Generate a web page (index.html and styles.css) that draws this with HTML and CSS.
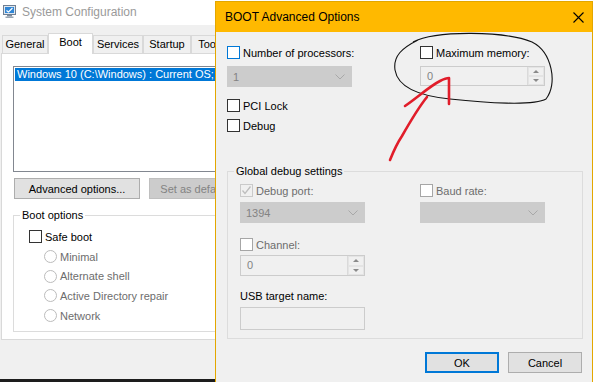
FILE: index.html
```html
<!DOCTYPE html>
<html lang="en">
  <head>
    <meta charset="UTF-8" />
    <meta name="viewport" content="width=device-width, initial-scale=1.0" />
    <title>BOOT Advanced Options</title>
    <link rel="stylesheet" href="styles.css">
  </head>

  <body>
    <div class="desktop">
      <!-- msconfig window, partly hidden behind the dialog -->
      <div class="window msconfig">
        <div class="titlebar">
          <svg class="app-icon" width="13" height="13" viewBox="0 0 13 13">
            <rect x="0.5" y="0.5" width="12" height="9" fill="#dfe6ee" stroke="#6f7f92" />
            <rect x="2" y="2" width="9" height="6" fill="#2f86d6" />
            <path d="M3.5 5.5 L5.5 7 L9.5 3" fill="none" stroke="#fff" stroke-width="1.2" />
            <rect x="4" y="10" width="5" height="1.5" fill="#7d8a99" />
            <rect x="2.5" y="11.5" width="8" height="1.5" fill="#9aa6b3" />
          </svg>
          <span class="title">System Configuration</span>
        </div>

        <div class="tabs">
          <div class="tab tab-general">General</div>
          <div class="tab tab-boot active">Boot</div>
          <div class="tab tab-services">Services</div>
          <div class="tab tab-startup">Startup</div>
          <div class="tab tab-tools">Tools</div>
        </div>

        <div class="tab-page">
          <div class="listbox">
            <div class="list-item selected">Windows 10 (C:\Windows) : Current OS; Default OS</div>
          </div>

          <div class="button-row">
            <button class="btn btn-advanced">Advanced options...</button>
            <button class="btn btn-default" disabled>Set as default</button>
          </div>

          <fieldset class="group boot-options">
            <legend>Boot options</legend>
            <div class="check">
              <span class="cb"></span>
              <span>Safe boot</span>
            </div>
            <div class="radio-list">
              <div class="radio"><span class="rb"></span><span>Minimal</span></div>
              <div class="radio"><span class="rb"></span><span>Alternate shell</span></div>
              <div class="radio"><span class="rb"></span><span>Active Directory repair</span></div>
              <div class="radio"><span class="rb"></span><span>Network</span></div>
            </div>
          </fieldset>
        </div>

        <div class="taskbar"></div>
      </div>

      <!-- BOOT Advanced Options dialog -->
      <div class="window dialog">
        <div class="dlg-titlebar">
          <span class="dlg-title">BOOT Advanced Options</span>
          <svg class="close" width="11" height="11" viewBox="0 0 11 11">
            <path d="M0.5 0.5 L10.5 10.5 M10.5 0.5 L0.5 10.5" stroke="#000" stroke-width="1.1" />
          </svg>
        </div>

        <div class="dlg-body">
          <div class="top-row">
            <div class="col col-left">
              <div class="check">
                <span class="cb focus"></span>
                <span>Number of processors:</span>
              </div>
              <div class="combo combo-proc">
                <span>1</span>
                <svg width="10" height="6" viewBox="0 0 10 6"><polyline points="0.5,0.5 5,5 9.5,0.5" fill="none" stroke="#a8a8a8" /></svg>
              </div>
              <div class="check check-pci">
                <span class="cb"></span>
                <span>PCI Lock</span>
              </div>
              <div class="check check-debug">
                <span class="cb"></span>
                <span>Debug</span>
              </div>
            </div>
            <div class="col col-right">
              <div class="check">
                <span class="cb"></span>
                <span>Maximum memory:</span>
              </div>
              <div class="spin spin-mem">
                <span class="spin-value">0</span>
                <span class="spin-buttons">
                  <span class="spin-up"></span>
                  <span class="spin-down"></span>
                </span>
              </div>
            </div>
          </div>

          <fieldset class="group debug-group">
            <legend>Global debug settings</legend>
            <div class="dg-row">
              <div class="col dg-left">
                <div class="check disabled">
                  <span class="cb checked">
                    <svg width="11" height="11" viewBox="0 0 11 11"><polyline points="1.5,5.5 4,8.5 9.5,1.5" fill="none" stroke="#bdbdbd" stroke-width="1.3" /></svg>
                  </span>
                  <span>Debug port:</span>
                </div>
                <div class="combo combo-port">
                  <span>1394</span>
                  <svg width="10" height="6" viewBox="0 0 10 6"><polyline points="0.5,0.5 5,5 9.5,0.5" fill="none" stroke="#a8a8a8" /></svg>
                </div>
                <div class="check disabled check-channel">
                  <span class="cb"></span>
                  <span>Channel:</span>
                </div>
                <div class="spin spin-channel">
                  <span class="spin-value">0</span>
                  <span class="spin-buttons">
                    <span class="spin-up"></span>
                    <span class="spin-down"></span>
                  </span>
                </div>
                <div class="field-label">USB target name:</div>
                <div class="textbox"></div>
              </div>
              <div class="col dg-right">
                <div class="check disabled">
                  <span class="cb"></span>
                  <span>Baud rate:</span>
                </div>
                <div class="combo combo-baud">
                  <span></span>
                  <svg width="10" height="6" viewBox="0 0 10 6"><polyline points="0.5,0.5 5,5 9.5,0.5" fill="none" stroke="#a8a8a8" /></svg>
                </div>
              </div>
            </div>
          </fieldset>

          <div class="dlg-buttons">
            <button class="btn btn-ok">OK</button>
            <button class="btn btn-cancel">Cancel</button>
          </div>
        </div>
      </div>

      <!-- hand drawn marks on top of the screenshot -->
      <svg class="marks" width="595" height="382" viewBox="0 0 595 382">
        <path d="M413 42 C436 30, 505 31, 532 42 C552 52, 558 84, 546 99 C534 106, 486 103, 450 99 C420 96, 398 88, 395 70 C393 56, 402 48, 418 40"
          fill="none" stroke="#111" stroke-width="1.1" />
        <path d="M390 160 C394 150, 398 142, 402 136 C410 122, 418 108, 427 97"
          fill="none" stroke="#e11d2a" stroke-width="2.6" stroke-linecap="round" />
        <path d="M405 106 C418 97, 430 86, 440 81 C444 79, 447 78, 449 78 L449 104"
          fill="none" stroke="#e11d2a" stroke-width="2.6" stroke-linecap="round" stroke-linejoin="round" />
      </svg>
    </div>
  </body>
</html>
```

FILE: styles.css
```css
body {
  margin: 0;
  background: #fff;
  font-family: "Liberation Sans", Arial, sans-serif;
  font-size: 11px;
  color: #000;
}
.desktop {
  position: relative;
  width: 595px;
  height: 382px;
  overflow: hidden;
}
.window {
  position: absolute;
  box-sizing: border-box;
}

/* msconfig window */
.msconfig {
  left: 0;
  top: 0;
  width: 216px;
  height: 382px;
  overflow: hidden;
  background: #f0f0f0;
  display: flex;
  flex-direction: column;
}
.titlebar {
  flex: none;
  height: 25px;
  box-sizing: border-box;
  padding: 0 0 2px 3px;
  background: #fff;
  display: flex;
  align-items: center;
  gap: 6px;
}
.title {
  font-size: 12px;
  color: #9a9a9a;
}
.tabs {
  flex: none;
  height: 28px;
  padding-left: 2px;
  display: flex;
  align-items: flex-end;
}
.tab {
  flex: none;
  box-sizing: border-box;
  height: 18px;
  line-height: 17px;
  border: 1px solid #d9d9d9;
  border-bottom: 0;
  background: #f0f0f0;
  text-align: center;
}
.tab-general {
  width: 46px;
}
.tab-boot {
  width: 45px;
}
.tab-services {
  width: 50px;
}
.tab-startup {
  width: 48px;
}
.tab-tools {
  width: 40px;
}
.tab.active {
  position: relative;
  z-index: 1;
  height: 21px;
  line-height: 17px;
  margin-bottom: -1px;
  background: #fff;
}
.tab-page {
  flex: none;
  width: 260px;
  height: 287px;
  box-sizing: border-box;
  margin-left: 1px;
  padding: 12px 0 0 11px;
  border: 1px solid #d9d9d9;
  background: #fff;
}
.listbox {
  height: 106px;
  box-sizing: border-box;
  border: 1px solid #828790;
  padding: 1px;
  overflow: hidden;
}
.list-item {
  height: 13px;
  line-height: 13px;
  padding-left: 2px;
  white-space: nowrap;
}
.list-item.selected {
  background: #0078d7;
  color: #fff;
}
.button-row {
  display: flex;
  gap: 9px;
  margin-top: 6px;
  padding-left: 1px;
}
.btn {
  flex: none;
  box-sizing: border-box;
  height: 21px;
  padding: 0;
  border: 1px solid #adadad;
  background: #e1e1e1;
  font: inherit;
  color: #000;
}
.btn-advanced {
  width: 126px;
}
.btn-default {
  width: 90px;
  background: #cccccc;
  border-color: #bfbfbf;
  color: #838383;
}

/* group boxes */
.group {
  margin: 0;
  border: 1px solid #dcdcdc;
}
.group legend {
  padding: 0 2px;
  line-height: 14px;
}
.boot-options {
  box-sizing: border-box;
  height: 124px;
  margin-top: 9px;
  padding: 8px 0 0 15px;
}
.boot-options legend {
  margin-left: -9px;
}

/* checkboxes and radios */
.check {
  display: flex;
  align-items: center;
  gap: 3px;
  height: 13px;
  white-space: nowrap;
}
.cb {
  flex: none;
  box-sizing: border-box;
  width: 13px;
  height: 13px;
  border: 1px solid #333;
  background: #fff;
  display: flex;
  align-items: center;
  justify-content: center;
}
.cb.focus {
  border-color: #0078d7;
}
.check.disabled {
  color: #6d6d6d;
}
.check.disabled .cb {
  border-color: #a6a6a6;
}
.check.disabled .cb.checked {
  border-color: #cacaca;
  background: #f0f0f0;
}
.radio-list {
  margin-top: 4px;
  padding-left: 15px;
}
.radio {
  display: flex;
  align-items: center;
  gap: 3px;
  height: 19.6px;
  color: #6d6d6d;
}
.rb {
  box-sizing: border-box;
  width: 13px;
  height: 13px;
  border: 1px solid #bcbcbc;
  border-radius: 50%;
  background: #fff;
}
.taskbar {
  margin-top: auto;
  height: 3px;
  background: #1d1d1d;
}

/* dialog */
.dialog {
  left: 215px;
  top: 1px;
  width: 378px;
  height: 381px;
  border: 1px solid #e3a700;
  border-bottom: 0;
  background: #f0f0f0;
  display: flex;
  flex-direction: column;
}
.dlg-titlebar {
  flex: none;
  height: 30px;
  padding: 0 8px 0 9px;
  background: #ffb900;
  display: flex;
  align-items: center;
  justify-content: space-between;
  font-size: 12px;
}
.dlg-body {
  flex: 1;
  padding: 14px 0 0 11px;
}
.top-row {
  display: flex;
}
.col {
  display: flex;
  flex-direction: column;
}
.col-left {
  width: 193px;
}
.col-right {
  width: 125px;
}
.combo {
  box-sizing: border-box;
  width: 125px;
  height: 21px;
  margin-top: 7px;
  padding: 0 6px 0 5px;
  border: 1px solid #cccccc;
  background: #cccccc;
  color: #838383;
  display: flex;
  align-items: center;
  justify-content: space-between;
}
.check-pci {
  margin-top: 12px;
}
.check-debug {
  margin-top: 7px;
}
.spin {
  box-sizing: border-box;
  width: 125px;
  height: 20px;
  margin-top: 7px;
  border: 1px solid #cccccc;
  background: #f0f0f0;
  display: flex;
}
.spin-value {
  flex: 1;
  padding-left: 6px;
  line-height: 18px;
  color: #838383;
}
.spin-buttons {
  width: 16px;
  display: flex;
  flex-direction: column;
  border-left: 1px solid #dadada;
}
.spin-up,
.spin-down {
  flex: 1;
  position: relative;
  border: 1px solid #e4e4e4;
}
.spin-up::after,
.spin-down::after {
  content: "";
  position: absolute;
  left: 4px;
  top: 2px;
  border-left: 3px solid transparent;
  border-right: 3px solid transparent;
}
.spin-up::after {
  border-bottom: 3px solid #8a8a8a;
}
.spin-down::after {
  border-top: 3px solid #8a8a8a;
}

.debug-group {
  margin: 32px 9px 0 0;
  padding: 6px 0 8px 12px;
}
.debug-group legend {
  margin-left: -6px;
}
.dg-row {
  display: flex;
}
.dg-left {
  width: 180px;
}
.dg-right {
  width: 125px;
}
.combo-port,
.combo-baud {
  margin-top: 5px;
}
.check-channel {
  margin-top: 15px;
}
.spin-channel {
  height: 21px;
  margin-top: 4px;
}
.spin-channel .spin-value {
  line-height: 19px;
}
.field-label {
  margin-top: 13px;
  line-height: 14px;
}
.textbox {
  box-sizing: border-box;
  width: 125px;
  height: 23px;
  margin-top: 4px;
  border: 1px solid #cccccc;
  background: #f0f0f0;
}
.dlg-buttons {
  display: flex;
  justify-content: flex-end;
  gap: 9px;
  margin-top: 13px;
  padding-right: 10px;
}
.btn-ok,
.btn-cancel {
  width: 74px;
}
.btn-ok {
  border: 2px solid #0078d7;
}

.marks {
  position: absolute;
  left: 0;
  top: 0;
  pointer-events: none;
}
```
